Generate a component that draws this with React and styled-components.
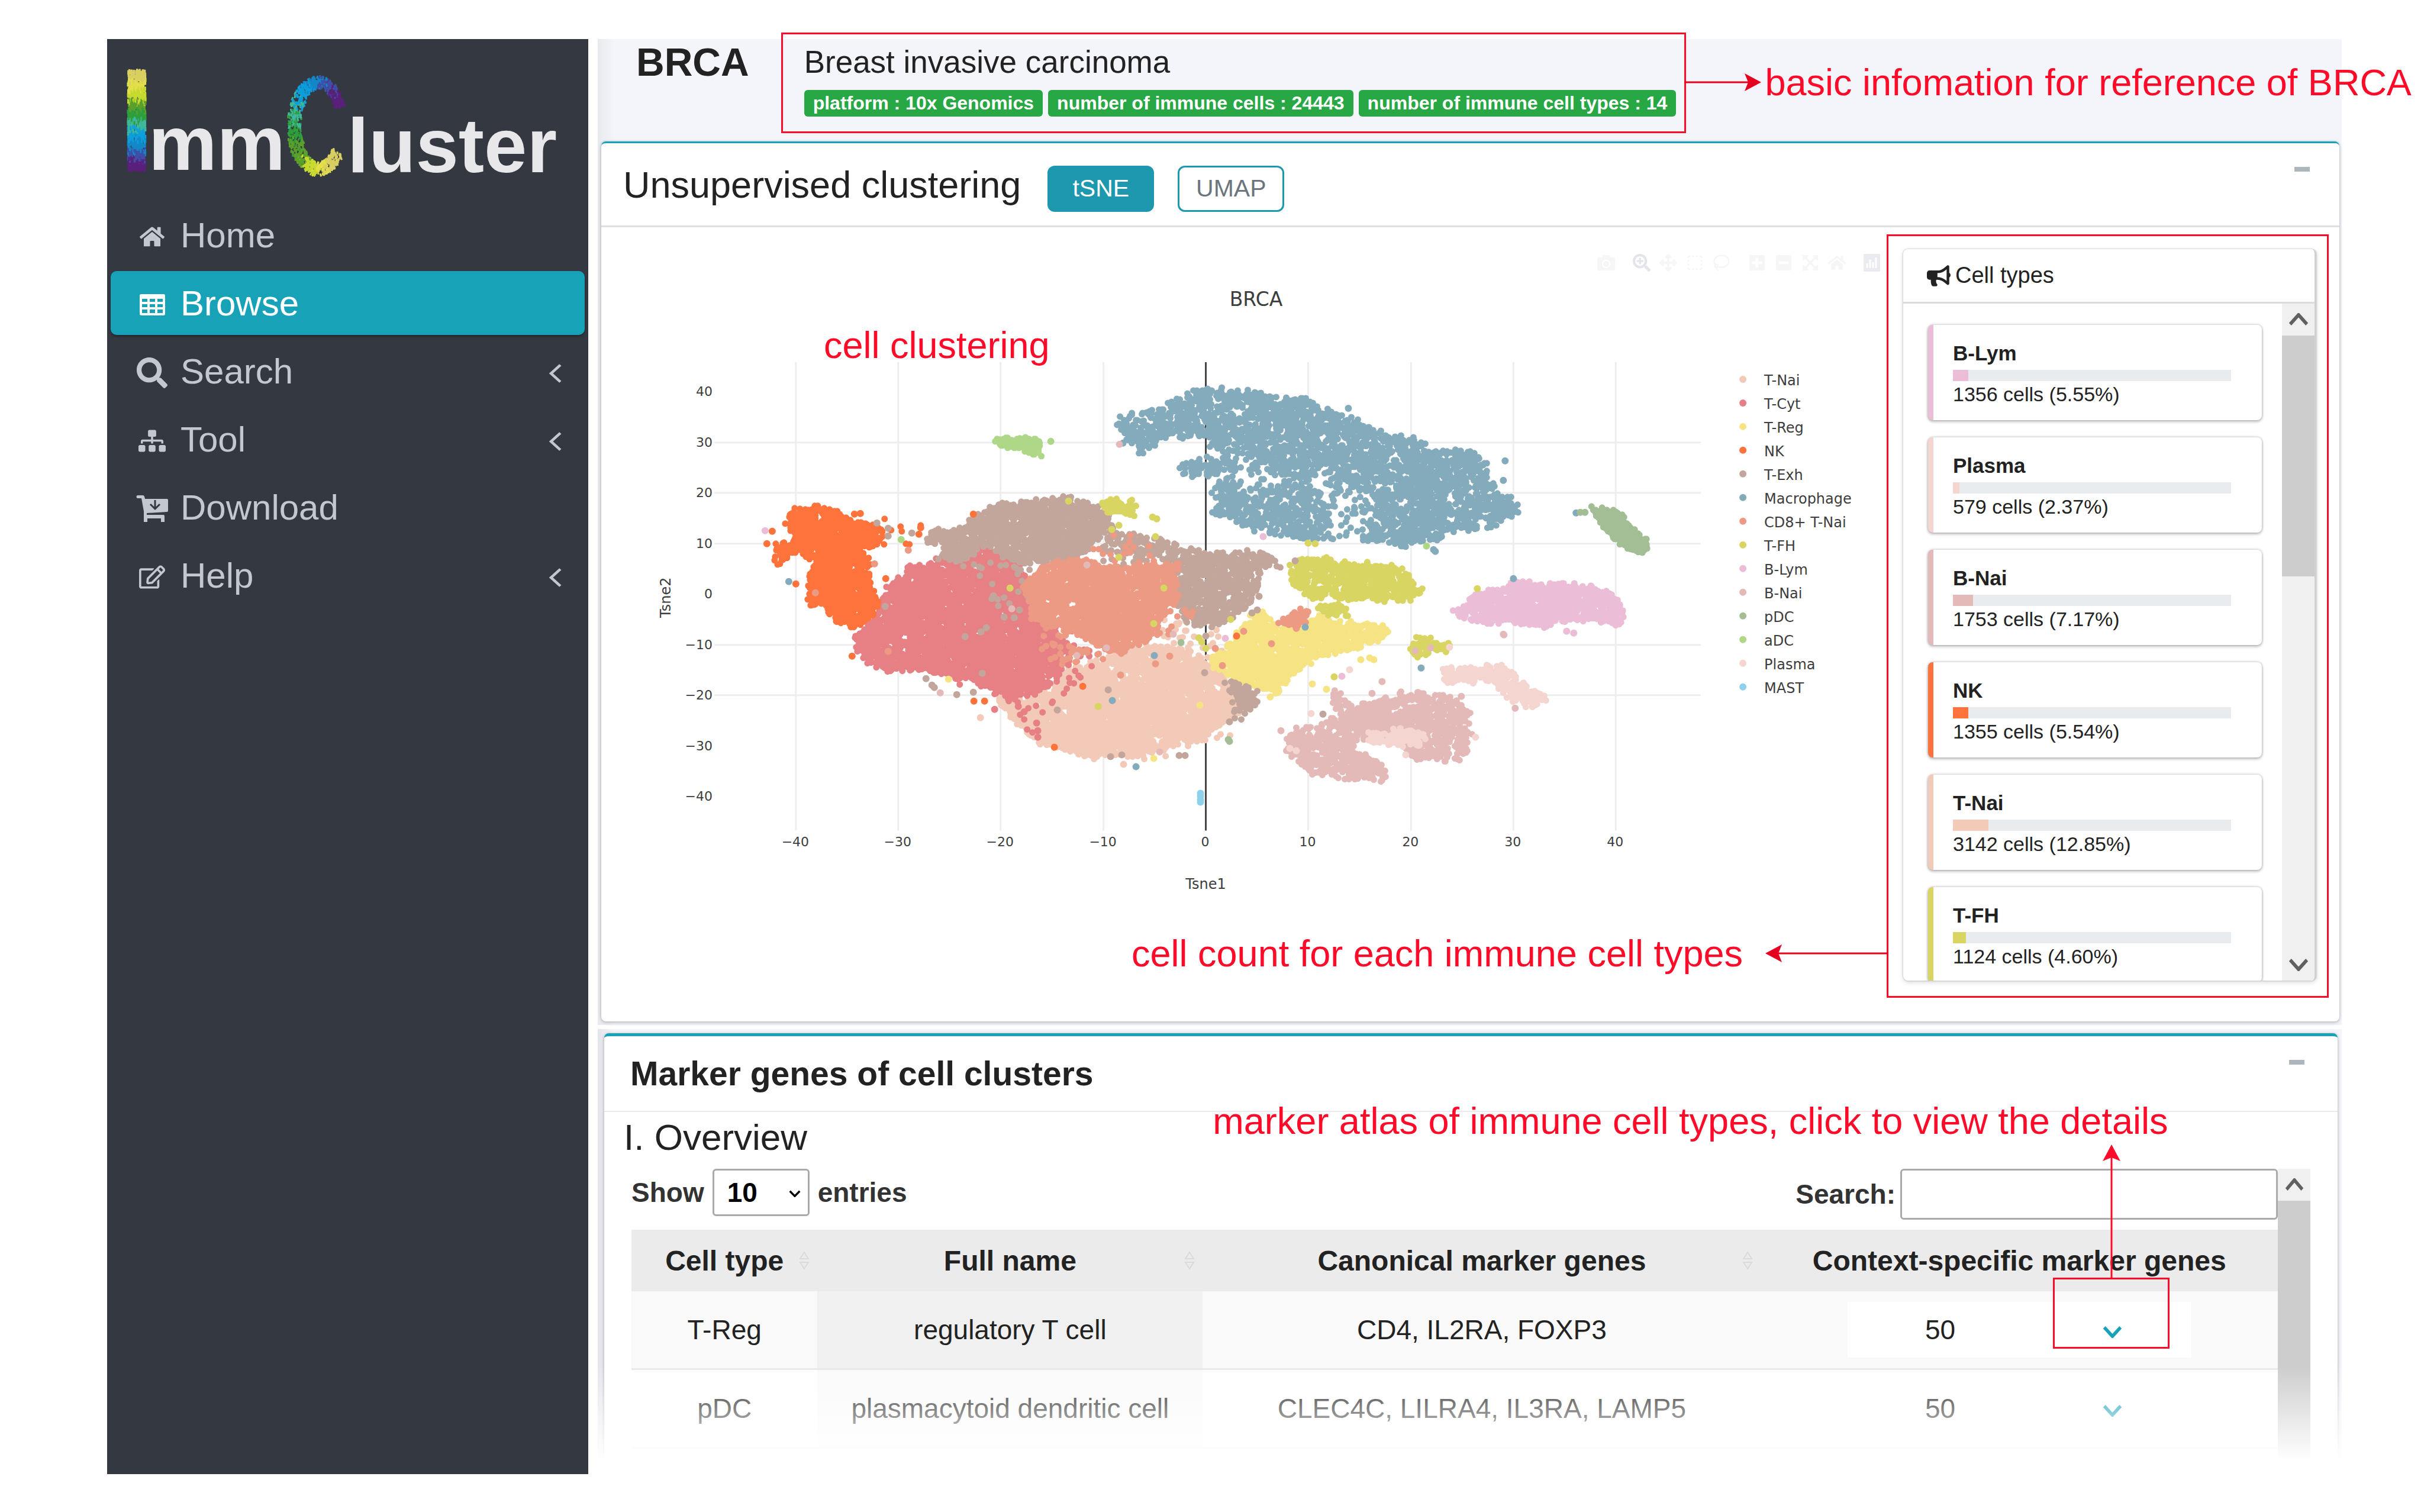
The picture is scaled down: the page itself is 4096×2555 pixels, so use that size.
import React from "react";
import styled, { createGlobalStyle } from "styled-components";
import {
  FaHome,
  FaSearch,
  FaSitemap,
  FaRegEdit,
  FaBullhorn,
  FaCamera,
  FaPlusSquare,
  FaMinusSquare,
  FaExpandArrowsAlt,
  FaSearchPlus,
  FaArrowsAlt,
} from "react-icons/fa";
import { Lasso, SquareDashed } from "lucide-react";

const COLORS = {
  "T-Nai": "#f3c9b8",
  "T-Cyt": "#e78085",
  "T-Reg": "#f6e484",
  NK: "#fe723b",
  "T-Exh": "#c2a69c",
  Macrophage: "#84abbb",
  "CD8+ T-Nai": "#ec9a83",
  "T-FH": "#d9d563",
  "B-Lym": "#ebbdd6",
  "B-Nai": "#e4bab9",
  pDC: "#a3be95",
  aDC: "#afd788",
  Plasma: "#f4d5d0",
  MAST: "#8dd2ea",
};

const cellTypes = [
  { name: "B-Lym", count: 1356, percent: "5.55" },
  { name: "Plasma", count: 579, percent: "2.37" },
  { name: "B-Nai", count: 1753, percent: "7.17" },
  { name: "NK", count: 1355, percent: "5.54" },
  { name: "T-Nai", count: 3142, percent: "12.85" },
  { name: "T-FH", count: 1124, percent: "4.60" },
];

const markers = [
  {
    type: "T-Reg",
    full: "regulatory T cell",
    genes: "CD4, IL2RA, FOXP3",
    specific: 50,
  },
  {
    type: "pDC",
    full: "plasmacytoid dendritic cell",
    genes: "CLEC4C, LILRA4, IL3RA, LAMP5",
    specific: 50,
  },
];

// cluster outlines in t-SNE units, density is in dots per square pixel
const clusters = [
  {
    name: "T-Nai",
    density: 0.06,
    shape: [[-20.5, -20.8], [-17.5, -20.8], [-15.2, -19], [-13.3, -15], [-10.5, -13.5], [-7.4, -10.6], [-2.7, -11], [-0.4, -12.9], [1.9, -16.9], [3.1, -20.8], [3.1, -24], [0.8, -26.4], [-0.4, -28.9], [-4.3, -30], [-7, -32], [-11.3, -32], [-13.6, -30.8], [-16.4, -29], [-18.7, -24.8]],
  },
  {
    name: "T-Nai",
    density: 0.006,
    shape: [[-5, -5], [1.5, -6], [2, -14], [-5, -14]],
  },
  {
    name: "T-Nai",
    density: 0.003,
    shape: [[-20, -24], [-15, -30], [-6, -33.5], [2.5, -29], [3.5, -25], [0, -27], [-10, -31]],
  },
  {
    name: "T-Cyt",
    density: 0.06,
    shape: [[-28.7, 5.6], [-26.9, 6], [-23.4, 10.7], [-21.4, 9.2], [-19.1, 6.8], [-17.5, 3.6], [-17, -1.1], [-15.6, -5], [-13.8, -9], [-13.4, -12.9], [-14.6, -16.2], [-16, -18.6], [-17.5, -20], [-19.5, -20.3], [-21.4, -18.3], [-23.4, -16.8], [-25.7, -15.6], [-29.2, -14.6], [-30.8, -15.2], [-33.1, -13.2], [-34.5, -8.6], [-33.3, -7], [-31.6, -3.5], [-31.4, 1.3], [-30, 2.8]],
  },
  {
    name: "T-Cyt",
    density: 0.005,
    shape: [[-30, -14], [-20, -20], [-17, -28], [-13, -18], [-10.5, -13], [-13, -7], [-18, -15]],
  },
  {
    name: "T-Reg",
    density: 0.06,
    shape: [[0.2, -13.4], [2.4, -10], [3.8, -5.4], [5.4, -3.8], [7.1, -7], [11.3, -4.3], [13.7, -5.6], [17.3, -6.4], [18.1, -7.9], [15.1, -10.2], [10.4, -12.7], [8, -16.5], [7.4, -19.2], [5.2, -19], [2.8, -16.5]],
  },
  {
    name: "NK",
    density: 0.06,
    shape: [[-40.8, 14.3], [-40.2, 16.4], [-38.7, 17.2], [-37, 16.9], [-35.9, 16.3], [-34.7, 14.4], [-32.7, 14.2], [-31.5, 12.3], [-31.9, 10], [-33.3, 9.2], [-32.7, 4.4], [-32.7, 1.3], [-32, -1.1], [-32.3, -3.5], [-33.3, -5.2], [-33.9, -7], [-35.9, -5.2], [-37.2, -2.4], [-38.6, -2], [-38.8, 1.3], [-38.4, 4.4], [-39, 8.4], [-40.5, 7.8], [-41.7, 5.9], [-42, 9.2], [-40.2, 10.7]],
  },
  {
    name: "NK",
    density: 0.003,
    shape: [[-33, 15.5], [-27, 13.5], [-28, 9], [-32, 8], [-32, 0], [-33, 0]],
  },
  {
    name: "T-Exh",
    density: 0.055,
    shape: [[-23.8, 13.1], [-22.6, 15.6], [-20.3, 17.5], [-17.2, 18.6], [-13.3, 19], [-10.9, 17.4], [-9.6, 16], [-9.2, 13.1], [-10.5, 10.7], [-12.5, 7], [-14.4, 5.9], [-16, 6.3], [-18.3, 6.3], [-19.9, 7.9], [-21.4, 9.9], [-23, 8], [-23.6, 5.6], [-25.3, 7.6], [-26.6, 6.6], [-25, 10], [-27.5, 10.7], [-26.5, 12.6]],
  },
  {
    name: "T-Exh",
    density: 0.04,
    shape: [[-9.5, 10.5], [-9.5, 12], [-5.7, 11.4], [-2.4, 9.5], [0, 8], [5.7, 8.2], [7.4, 5.5], [5.3, 5.3], [5.2, 1.9], [4.2, -2.4], [1.4, -6.2], [-1.9, -5.8], [-2.8, -2.4], [-3.5, 1], [-2.4, 3.6], [-4.3, 6.3]],
  },
  {
    name: "T-Exh",
    density: 0.01,
    shape: [[-10.5, 10], [-6, 9], [-6, 6], [-10.5, 5]],
  },
  {
    name: "T-Exh",
    density: 0.04,
    shape: [[1.7, -16.5], [5, -19.3], [5, -21.9], [3.3, -24.6], [2.4, -23.6], [2.8, -20.2]],
  },
  {
    name: "T-Exh",
    density: 0.003,
    shape: [[-26, 8], [-16, 6], [-17, -3], [-22, -4], [-22, 4]],
  },
  {
    name: "Macrophage",
    density: 0.034,
    shape: [[-8.4, 34.7], [-5.2, 36.2], [-1.4, 40], [0, 40.5], [5.7, 39.8], [6.6, 38.8], [9.7, 38.8], [11.8, 36.2], [15.1, 34.1], [18, 31.5], [20.3, 30.7], [22.2, 29], [26.3, 28.2], [27.7, 24.7], [28.2, 20.5], [30.5, 18.2], [30.3, 15.8], [27.7, 12.8], [24.6, 12.3], [22.7, 11.2], [19.4, 9.6], [15.1, 11], [17.2, 15], [16.4, 19.5], [12.8, 22.5], [11.5, 24.5], [9, 23], [5, 26.5], [0, 30.9], [-4.3, 30.9], [-6.3, 27.2], [-7, 29.5], [-8.4, 31.5]],
  },
  {
    name: "Macrophage",
    density: 0.034,
    shape: [[-2.7, 24.5], [-1.2, 27], [1, 25.4], [1.4, 23.6], [-1.7, 22.8]],
  },
  {
    name: "Macrophage",
    density: 0.028,
    shape: [[1.4, 22.5], [6, 21.5], [8, 22.5], [11.5, 20.5], [12.2, 16], [12.2, 11], [10.4, 10.7], [7.1, 11.4], [4.3, 13], [0.7, 16], [0.7, 19.7]],
  },
  {
    name: "Macrophage",
    density: 0.01,
    shape: [[0, 31], [9, 24], [16.5, 20], [17, 11], [12, 11], [12, 22], [1, 23], [0, 27]],
  },
  {
    name: "CD8+ T-Nai",
    density: 0.06,
    shape: [[-14.4, 6.3], [-12.1, 7], [-9.8, 5.3], [-6.6, 5.7], [-2.8, 5.7], [-2.9, 2], [-3.3, -1.1], [-4.3, -4.7], [-5.8, -9], [-8.6, -11.2], [-10.5, -10.2], [-13.3, -7], [-15.2, -5.8], [-17, -4.7], [-17, -0.3], [-18, 1.1], [-16.4, 4.9]],
  },
  {
    name: "CD8+ T-Nai",
    density: 0.007,
    shape: [[-16, -5], [-10, -9], [-5, -6], [-1, -4], [-4, 3], [-3, -8], [-9, -12], [-13.5, -14.5], [-16, -12]],
  },
  {
    name: "CD8+ T-Nai",
    density: 0.003,
    shape: [[-13, 9], [-8, 12.5], [-5, 9], [-5, 5], [-13, 6]],
  },
  {
    name: "CD8+ T-Nai",
    density: 0.08,
    shape: [[7.2, -5.2], [9, -2.9], [10.2, -4.4], [9.9, -5.9], [7.4, -6]],
  },
  {
    name: "T-FH",
    density: 0.05,
    shape: [[7.9, 5], [9.5, 6.8], [11.8, 7.1], [13.2, 6], [18.5, 5.9], [19.9, 3.6], [21.1, 0.4], [19.9, -1.6], [17.5, -1.3], [13.7, -1.3], [9.9, -0.5], [8.4, 2.3]],
  },
  {
    name: "T-FH",
    density: 0.06,
    shape: [[10.9, -2.2], [13.9, -2.6], [13.5, -4.5], [11, -3.8]],
  },
  {
    name: "T-FH",
    density: 0.07,
    shape: [[19.8, -10], [21.3, -8.3], [24.1, -10.8], [22.2, -11.3], [20.3, -12]],
  },
  {
    name: "T-FH",
    density: 0.08,
    shape: [[-10.2, 17.8], [-9, 18.6], [-6.9, 17.8], [-7, 15.3], [-8.2, 16.5], [-9.3, 15.9]],
  },
  {
    name: "B-Lym",
    density: 0.06,
    shape: [[23.6, -3.9], [25.5, -2.3], [26.7, 0.6], [28.4, 0.6], [30.3, 2.6], [32.6, 1.9], [35.5, 1.9], [36.9, 1.5], [39.2, 0.2], [40.6, -1.6], [40.8, -4.1], [40.2, -6.2], [38.3, -5.1], [34, -5.4], [33.1, -7], [31.7, -5.8], [26, -5.4]],
  },
  {
    name: "B-Nai",
    density: 0.042,
    shape: [[12.1, -19], [12.8, -18.9], [13.7, -22.1], [16.1, -21.7], [19.9, -19.3], [24.1, -20.4], [25.6, -23.6], [25.8, -28.6], [25.3, -32.6], [20.3, -32.7], [19.2, -29.6], [15, -28.6], [15, -31.6], [16.8, -33], [17.7, -36.5], [14.7, -36.9], [10.4, -35.6], [7.6, -31.4], [8.2, -26.9], [11.3, -25.5], [13, -24]],
  },
  {
    name: "Plasma",
    density: 0.055,
    shape: [[23.1, -14.8], [26.5, -14.4], [29.1, -14.4], [30.9, -17.6], [33, -19.5], [33, -21.3], [31.2, -22.4], [29.3, -20], [28.4, -17.2], [23.1, -17.4]],
  },
  {
    name: "Plasma",
    density: 0.055,
    shape: [[15.8, -27.5], [19.9, -26.9], [21.6, -28.4], [20.8, -29.9], [16.3, -29.3]],
  },
  {
    name: "pDC",
    density: 0.2,
    shape: [[37.8, 16.8], [40.2, 16], [41.3, 13.2], [43, 10.4], [42.9, 8.3], [41.4, 8.8], [39.3, 12], [38.6, 14.8]],
  },
  {
    name: "aDC",
    density: 0.2,
    shape: [[-20.4, 30.7], [-16.4, 30.5], [-16.2, 27.2], [-17.6, 28.8], [-20.2, 29.6]],
  },
];

const strays = [
  ["NK", -42.3, 12.4], ["NK", -42.8, 10], ["NK", -40, 2], ["NK", -33.7, 15.9], ["NK", -34.3, 15.8],
  ["NK", -27.8, 13.1], ["NK", -28, 11.8], ["NK", -31.2, 3], ["NK", -34.5, -12.3], ["NK", -22.6, -21.2],
  ["NK", -21.6, -21.2], ["NK", -12, -18.3], ["NK", -14.8, -30.3], ["NK", -22.7, 15.8], ["NK", 3, -8.3],
  ["B-Lym", -43, 12.5], ["Macrophage", -40.7, 2.5], ["T-Exh", -32.1, 14], ["T-Exh", -31, 13],
  ["T-Exh", -28.7, 12], ["T-Exh", -31, 11.5], ["T-Exh", -31.3, -2.5], ["aDC", -29.7, 10.8],
  ["T-Exh", -23.5, -8.4], ["T-Exh", -20.7, -0.4], ["T-Exh", -21.9, -7.5], ["T-Exh", -21.4, -6.7],
  ["T-Exh", -19.7, -4.6], ["T-Exh", -18.7, -4.7], ["T-Exh", -18.2, -3.1], ["T-Exh", -21.8, -15.7],
  ["T-Exh", -27.3, -16.7], ["T-Exh", -26.7, -18], ["T-Exh", -26.5, -18.5], ["T-Exh", -24.3, -19.9],
  ["T-Exh", -22.7, -19.4], ["B-Nai", -25.9, -19.5], ["B-Nai", -18.9, -2.9], ["T-Reg", -25.1, -16.8],
  ["T-FH", -19.1, 1.2], ["T-FH", -13.4, 18.4], ["T-FH", -8.5, 13.6], ["T-FH", -9.2, 12.7],
  ["T-FH", -5.2, 15.2], ["T-FH", -4.8, 14.8], ["T-FH", -4.9, 11.3], ["T-FH", -8.5, 7.2],
  ["T-FH", -4.1, 1.2], ["T-FH", -5.1, -5.8], ["T-FH", -10.5, -22.2], ["T-FH", -0.7, -8.6],
  ["T-FH", -0.4, -9.5], ["T-FH", 0, -10.8], ["T-FH", 2.4, -5], ["T-FH", 10, 10.1], ["T-FH", 10.7, 10],
  ["T-FH", 12.5, -16.4], ["T-FH", 26.5, 1], ["pDC", -2.4, -9.6], ["pDC", 2.2, -28.8],
  ["pDC", 2.3, -29.1], ["Macrophage", 36.1, 16], ["pDC", 36.5, 16.1], ["pDC", 37, 16.1],
  ["aDC", -15.1, 30.2], ["aDC", 21.5, 9.5],
  ["Macrophage", -5, -12.2], ["Macrophage", -9.1, -21], ["Macrophage", -6.8, -34.2],
  ["Macrophage", 21, -14.6], ["Macrophage", 9.7, -6.5], ["Macrophage", 22.2, 8.8],
  ["Macrophage", 22.4, 8.4], ["Macrophage", 13.9, 36.7], ["Macrophage", 29.2, 26.3],
  ["Macrophage", 29, 22.4], ["Macrophage", -8.1, 29.8], ["Macrophage", 30, 3],
  ["B-Nai", -8.4, 29.6], ["B-Nai", -3.2, -7.9], ["B-Nai", -9.7, -10.6], ["B-Nai", -12.6, -12.2],
  ["B-Nai", -4.5, -31.2], ["B-Nai", -11.6, 5.7], ["B-Lym", 1.9, -8.8], ["B-Lym", 5.6, 11.3],
  ["B-Lym", 13.3, -16.2], ["B-Lym", 35.2, -7.4], ["B-Lym", 35.9, -7.7], ["B-Nai", 29, -7.9],
  ["B-Nai", 29.1, -8.1], ["B-Nai", 17.2, -17.3], ["B-Nai", 7.3, -27], ["B-Nai", 24.9, -20.2],
  ["B-Nai", 20.4, -11.2], ["B-Nai", 21.9, -10.6], ["B-Nai", 30.2, -22.6], ["B-Nai", 16.2, -19.7],
  ["Plasma", 23.8, -10.5], ["Plasma", 14, -15], ["Plasma", 10.3, -23.6], ["Plasma", 26.3, -28.3],
  ["Plasma", 8.2, -30.5], ["Plasma", 8.8, -31], ["Plasma", 19.5, -31.8], ["T-Exh", 11.4, -23.8],
  ["T-Exh", -9.5, -19], ["T-Exh", -14.5, -22.9], ["T-Exh", -9.3, -32.2], ["T-Exh", -8.2, -31.8],
  ["T-Exh", -2.6, -31.9], ["T-Exh", -2, -31.9], ["T-Exh", 5.2, -0.5], ["T-Exh", 8.7, 6.6],
  ["T-Exh", 4.5, -3.8], ["T-Exh", 5, -3.2], ["T-Exh", -0.1, -15.6], ["T-Exh", 0, -8.3],
  ["T-Exh", 2.3, -25.3], ["T-Reg", -5.1, -32.5], ["T-Reg", -0.6, -22], ["T-Reg", 15.1, -13],
  ["T-Reg", 16, -12.6], ["T-Reg", 16.4, -13], ["T-Reg", 10.4, -17.8], ["T-Reg", 11.8, -18.8],
  ["T-Reg", 6.3, -20.4], ["T-Nai", -22, -24.4], ["T-Nai", -8, -33.7], ["CD8+ T-Nai", 6.4, -9.8],
  ["CD8+ T-Nai", 1.6, -14.2], ["CD8+ T-Nai", 8.8, -6.8], ["CD8+ T-Nai", 3.7, -7.4],
  ["CD8+ T-Nai", -8.3, -16], ["CD8+ T-Nai", -4.9, -13.8], ["CD8+ T-Nai", -3.5, -12.3],
  ["CD8+ T-Nai", 0.9, -10.8], ["CD8+ T-Nai", -31, -11.3], ["CD8+ T-Nai", -38.1, 0.2],
  ["CD8+ T-Nai", -32.3, 6], ["CD8+ T-Nai", -29, 8.7], ["T-Cyt", -17.7, -23.3], ["T-Cyt", -16.4, -27],
  ["T-Cyt", -16.4, -28.3], ["T-Cyt", -16.5, -25.5], ["T-Cyt", -20.6, -22.8], ["T-Cyt", -18.3, -22.2],
  ["MAST", -0.5, -39.4], ["MAST", -0.5, -40], ["MAST", -0.5, -40.7], ["MAST", -0.5, -41.2],
];

const xTicks = [-40, -30, -20, -10, 0, 10, 20, 30, 40];
const yTicks = [40, 30, 20, 10, 0, -10, -20, -30, -40];
const yLines = [30, 20, 10, -10, -20];

const toX = (v) => Math.round(1022 + v * 17.33);
const toY = (v) => Math.round(583 - v * 8.55);
const tick = (v) => String(v).replace("-", "\u2212");

const createRandom = (seed) => {
  let state = seed;
  return () => {
    state = (state * 1664525 + 1013904223) % 4294967296;
    return state / 4294967296;
  };
};

const isInside = (x, y, points) => {
  let inside = false;
  for (let i = 0, j = points.length - 1; i < points.length; j = i++) {
    const [xi, yi] = points[i];
    const [xj, yj] = points[j];
    if (yi > y !== yj > y && x < ((xj - xi) * (y - yi)) / (yj - yi) + xi) {
      inside = !inside;
    }
  }
  return inside;
};

// one zero-length round-capped segment for every cell
const clusterPath = ({ shape, density }, index) => {
  const random = createRandom(index * 97 + 11);
  const points = shape.map(([x, y]) => [toX(x), toY(y)]);
  const xs = points.map((p) => p[0]);
  const ys = points.map((p) => p[1]);
  const left = Math.min(...xs);
  const top = Math.min(...ys);
  const width = Math.max(...xs) - left;
  const height = Math.max(...ys) - top;
  const total = Math.round(width * height * density);
  let path = "";
  for (let i = 0; i < total; i++) {
    const x = left + random() * width;
    const y = top + random() * height;
    if (isInside(x, y, points)) {
      const dx = Math.round(x + (random() - 0.5) * 10);
      const dy = Math.round(y + (random() - 0.5) * 10);
      path += `M${dx} ${dy}h0`;
    }
  }
  return path;
};

const logoColors = ["#d9cf62", "#e3df4a", "#c6d92f", "#5aa02c", "#2f9e3c", "#3fb89a", "#0c9fdb", "#1487c9", "#3f4fa8", "#5b1f7c"];

const logoColor = (t, random) => {
  const i = Math.floor((t + (random() - 0.5) * 0.1) * logoColors.length);
  return logoColors[Math.max(0, Math.min(logoColors.length - 1, i))];
};

const barSpecks = () => {
  const random = createRandom(5);
  return Array.from({ length: 1100 }, () => {
    const t = random();
    return {
      x: 29 + random() * 30,
      y: 50 + t * 168,
      dx: 0,
      dy: 7,
      color: logoColor(t, random),
    };
  });
};

const arcSpecks = () => {
  const random = createRandom(8);
  return Array.from({ length: 1000 }, () => {
    const t = random();
    const angle = ((38 + t * 297) * Math.PI) / 180;
    const reach = (random() - 0.5) * (24 - Math.abs(t - 0.4) * 10);
    const x = 351 + Math.cos(angle) * (41 + reach);
    const y = 144 + Math.sin(angle) * (73 + reach);
    return {
      x,
      y,
      dx: (random() - 0.5) * 5,
      dy: 5,
      color: logoColor(t, random),
    };
  });
};

const specks = [...barSpecks(), ...arcSpecks()];

const Logo = () => (
  <LogoLink href="#home" aria-label="ImmCluster">
    <svg viewBox="0 0 801 277" width="100%">
      {specks.map((s, i) => (
        <line
          key={i}
          x1={s.x.toFixed(1)}
          y1={s.y.toFixed(1)}
          x2={(s.x + s.dx).toFixed(1)}
          y2={(s.y + s.dy).toFixed(1)}
          stroke={s.color}
          strokeWidth="3"
        />
      ))}
      <text x="64" y="221">
        mm
      </text>
      <text x="400" y="225">
        luster
      </text>
    </svg>
  </LogoLink>
);

const TableIcon = () => (
  <svg width="43" height="36" viewBox="0 0 43 36" fill="currentColor">
    <path
      fillRule="evenodd"
      d="M3 0h37a3 3 0 0 1 3 3v30a3 3 0 0 1-3 3H3a3 3 0 0 1-3-3V3a3 3 0 0 1 3-3zM4 8v5h9V8zm13 0v5h9V8zm13 0v5h9V8zM4 17v5h9v-5zm13 0v5h9v-5zm13 0v5h9v-5zM4 26v6h9v-6zm13 0v6h9v-6zm13 0v6h9v-6z"
    />
  </svg>
);

const CartIcon = () => (
  <svg width="54" height="46" viewBox="0 0 54 46" fill="currentColor">
    <path d="M3 0h8a3 3 0 0 1 3 2l1 4h37a2 2 0 0 1 2 2v18a2 2 0 0 1-2 2l-34 2v3h28a2 2 0 0 1 2 2v10h-6v-6H19v6h-6V27L9 5H3a2 2 0 0 1 0-5z" />
    <path d="M32 8v14M24 15l8 8 8-8" fill="none" stroke="#343840" strokeWidth="3" />
  </svg>
);

const BarsIcon = () => (
  <svg width="28" height="30" viewBox="0 0 28 30">
    <rect width="28" height="30" rx="2" fill="#e9ebf0" />
    <path d="M6 24V16M11 24V10M16 24V14M21 24V6" stroke="#fff" strokeWidth="3" />
  </svg>
);

const Angle = ({ direction = "down", width, height, stroke }) => {
  const paths = {
    down: "M2 2L12 12L22 2",
    up: "M2 12L12 2L22 12",
    left: "M12 2L2 12L12 22",
  };
  return (
    <svg
      width={width}
      height={height}
      viewBox={direction === "left" ? "0 0 14 24" : "0 0 24 14"}
      fill="none"
      stroke="currentColor"
      strokeWidth={stroke}
      preserveAspectRatio="none"
      aria-hidden="true"
    >
      <path d={paths[direction]} />
    </svg>
  );
};

const SortIcon = () => (
  <svg width="18" height="34" viewBox="0 0 18 34" fill="none" stroke="#dadada" strokeWidth="2">
    <path d="M2 14L9 3L16 14ZM2 20L9 31L16 20Z" />
  </svg>
);

const menu = [
  { label: "Home", icon: <FaHome size={42} /> },
  { label: "Browse", icon: <TableIcon />, active: true },
  { label: "Search", icon: <FaSearch size={52} />, nested: true },
  { label: "Tool", icon: <FaSitemap size={46} />, nested: true },
  { label: "Download", icon: <CartIcon /> },
  { label: "Help", icon: <FaRegEdit size={44} />, nested: true },
];

const SideMenu = () => (
  <Sidebar>
    <Logo />
    <Menu>
      {menu.map((item) => (
        <MenuLink key={item.label} href={`#${item.label}`} $active={item.active}>
          <MenuIcon>{item.icon}</MenuIcon>
          <span>{item.label}</span>
          {item.nested && (
            <MenuArrow>
              <Angle direction="left" width={22} height={34} stroke={3} />
            </MenuArrow>
          )}
        </MenuLink>
      ))}
    </Menu>
  </Sidebar>
);

const Chart = () => (
  <Plot viewBox="0 40 2201 1196" role="img" aria-label="BRCA t-SNE scatter plot">
    <g stroke="#eeeeee" strokeWidth="3">
      {xTicks.map((v) => (
        <line key={v} x1={toX(v)} x2={toX(v)} y1="191" y2="983" />
      ))}
      {yLines.map((v) => (
        <line key={v} x1="191" x2="1859" y1={toY(v)} y2={toY(v)} />
      ))}
    </g>
    <line x1={toX(0)} x2={toX(0)} y1="191" y2="983" stroke="#444" strokeWidth="3" />
    {clusters.map((cluster, i) => (
      <path
        key={i}
        d={clusterPath(cluster, i)}
        stroke={COLORS[cluster.name]}
        strokeWidth="11"
        strokeLinecap="round"
      />
    ))}
    {strays.map(([name, x, y], i) => (
      <circle key={i} cx={toX(x)} cy={toY(y)} r="6" fill={COLORS[name]} />
    ))}
    <text x="1107" y="96" fontSize="33" textAnchor="middle">
      BRCA
    </text>
    <g fontSize="22">
      {xTicks.map((v) => (
        <text key={v} x={toX(v) - 1} y="1009" textAnchor="middle">
          {tick(v)}
        </text>
      ))}
      {yTicks.map((v) => (
        <text key={v} x="188" y={toY(v) + 7} textAnchor="end">
          {tick(v)}
        </text>
      ))}
    </g>
    <g fontSize="24">
      <text x="1022" y="1081" textAnchor="middle">
        Tsne1
      </text>
      <text transform="translate(117 589) rotate(-90)" textAnchor="middle">
        Tsne2
      </text>
      {Object.keys(COLORS).map((name, i) => (
        <g key={name}>
          <circle cx="1930" cy={220 + i * 40} r="6" fill={COLORS[name]} />
          <text x="1966" y={230 + i * 40}>
            {name}
          </text>
        </g>
      ))}
    </g>
  </Plot>
);

const ModeBar = () => (
  <Tools>
    <ToolGroup>
      <Tool aria-label="Download plot"><FaCamera /></Tool>
    </ToolGroup>
    <ToolGroup>
      <Tool aria-label="Zoom" $on><FaSearchPlus /></Tool>
      <Tool aria-label="Pan"><FaArrowsAlt /></Tool>
      <Tool aria-label="Box select"><SquareDashed size={30} /></Tool>
      <Tool aria-label="Lasso select"><Lasso size={30} /></Tool>
    </ToolGroup>
    <ToolGroup>
      <Tool aria-label="Zoom in"><FaPlusSquare /></Tool>
      <Tool aria-label="Zoom out"><FaMinusSquare /></Tool>
      <Tool aria-label="Autoscale"><FaExpandArrowsAlt /></Tool>
      <Tool aria-label="Reset axes"><FaHome /></Tool>
    </ToolGroup>
    <ToolGroup>
      <Tool aria-label="Plotly"><BarsIcon /></Tool>
    </ToolGroup>
  </Tools>
);

const CellTypes = () => (
  <PanelWrap>
    <Panel>
      <PanelTitle>
        <FaBullhorn size={40} />
        Cell types
      </PanelTitle>
      <PanelBody>
        <CellList>
          {cellTypes.map((cell) => (
            <CellCard key={cell.name} $color={COLORS[cell.name]}>
              <CellName>{cell.name}</CellName>
              <Progress>
                <ProgressFill $color={COLORS[cell.name]} style={{ width: `${cell.percent}%` }} />
              </Progress>
              <CellCount>
                {cell.count} cells ({cell.percent}%)
              </CellCount>
            </CellCard>
          ))}
        </CellList>
        <ScrollTrack>
          <ScrollButton aria-label="Scroll up">
            <Angle direction="up" width={34} height={22} stroke={4} />
          </ScrollButton>
          <ScrollThumb />
          <ScrollButton aria-label="Scroll down">
            <Angle width={34} height={22} stroke={4} />
          </ScrollButton>
        </ScrollTrack>
      </PanelBody>
    </Panel>
    <PanelFrame>
      <CountNote>
        cell count for each immune cell types
        <svg width="208" height="30" viewBox="0 0 208 30">
          <path d="M20 15H208" stroke="#e60020" strokeWidth="3" />
          <path d="M0 15L28 0L22 15L28 30Z" fill="#e60020" />
        </svg>
      </CountNote>
    </PanelFrame>
  </PanelWrap>
);

const MarkerTable = () => (
  <Table>
    <colgroup>
      <col style={{ width: "11.3%" }} />
      <col style={{ width: "23.4%" }} />
      <col style={{ width: "33.9%" }} />
      <col style={{ width: "31.4%" }} />
    </colgroup>
    <thead>
      <tr>
        {["Cell type", "Full name", "Canonical marker genes"].map((title) => (
          <th key={title}>
            <SortButton>
              {title}
              <SortIcon />
            </SortButton>
          </th>
        ))}
        <th>Context-specific marker genes</th>
      </tr>
    </thead>
    <tbody>
      {markers.map((row, i) => (
        <tr key={row.type}>
          <td>{row.type}</td>
          <td>{row.full}</td>
          <td>{row.genes}</td>
          <td>
            <Specific>
              <span>{row.specific}</span>
              <ToggleCell>
                <Toggle aria-label={`Show ${row.type} markers`}>
                  <Angle width={33} height={21} stroke={4} />
                </Toggle>
                {i === 0 && (
                  <ToggleFrame>
                    <AtlasNote>
                      marker atlas of immune cell types, click to view the details
                      <svg width="30" height="228" viewBox="0 0 30 228">
                        <path d="M15 20V228" stroke="#ff0a28" strokeWidth="3" />
                        <path d="M15 0L30 28L15 22L0 28Z" fill="#ff0a28" />
                      </svg>
                    </AtlasNote>
                  </ToggleFrame>
                )}
              </ToggleCell>
            </Specific>
          </td>
        </tr>
      ))}
    </tbody>
  </Table>
);

const App = () => {
  return (
    <Page>
      <GlobalStyle />
      <SideMenu />
      <Main>
        <Band>
          <Header>
            <h1>BRCA</h1>
            <Info>
              <InfoName>Breast invasive carcinoma</InfoName>
              <Badges>
                <Badge>platform : 10x Genomics</Badge>
                <Badge>number of immune cells : 24443</Badge>
                <Badge>number of immune cell types : 14</Badge>
              </Badges>
              <InfoNote>
                <svg width="130" height="30" viewBox="0 0 130 30">
                  <path d="M0 15H110" stroke="#e60020" strokeWidth="3" />
                  <path d="M130 15L102 0L108 15L102 30Z" fill="#e60020" />
                </svg>
                basic infomation for reference of BRCA
              </InfoNote>
            </Info>
          </Header>
          <Card>
            <ClusterHeader>
              <h2>Unsupervised clustering</h2>
              <Buttons>
                <ModeButton $active>tSNE</ModeButton>
                <ModeButton>UMAP</ModeButton>
              </Buttons>
              <Collapse aria-label="Collapse" />
            </ClusterHeader>
            <ClusterBody>
              <ChartArea>
                <ModeBar />
                <Chart />
                <ChartNote>cell clustering</ChartNote>
              </ChartArea>
              <CellTypes />
            </ClusterBody>
          </Card>
        </Band>
        <MarkerBand>
          <Card $thick>
            <MarkerHeader>
              <h2>Marker genes of cell clusters</h2>
              <Collapse aria-label="Collapse" />
            </MarkerHeader>
            <Overview>I. Overview</Overview>
            <MarkerBody>
              <TableArea>
                <Toolbar>
                  <Length>
                    Show
                    <SelectWrap>
                      <select defaultValue="10">
                        <option>10</option>
                        <option>25</option>
                        <option>50</option>
                      </select>
                      <Angle width={20} height={12} stroke={4} />
                    </SelectWrap>
                    entries
                  </Length>
                  <SearchLabel>
                    Search:
                    <input type="search" />
                  </SearchLabel>
                </Toolbar>
                <MarkerTable />
              </TableArea>
              <ScrollTrack>
                <ScrollButton aria-label="Scroll up">
                  <Angle direction="up" width={32} height={22} stroke={4} />
                </ScrollButton>
                <ScrollThumb $full />
              </ScrollTrack>
            </MarkerBody>
          </Card>
          <Fade />
        </MarkerBand>
      </Main>
    </Page>
  );
};

export default App;

const GlobalStyle = createGlobalStyle`
  * {
    box-sizing: border-box;
    margin: 0;
    padding: 0;
  }

  body {
    background: #fff;
    color: #222;
    font-family: "Liberation Sans", Arial, sans-serif;
  }

  button,
  input,
  select {
    border: none;
    background: none;
    font: inherit;
    color: inherit;
  }

  a {
    color: inherit;
    text-decoration: none;
  }
`;

const Page = styled.div`
  min-height: 100vh;
  display: flex;
  gap: 16px;
  padding: 66px 139px 64px 181px;
`;

const Sidebar = styled.aside`
  flex: 0 0 813px;
  padding: 0 6px;
  background: #343840;
  color: #c2c7d0;
`;

const LogoLink = styled.a`
  display: block;

  svg {
    display: block;
  }

  text {
    font-size: 130px;
    font-weight: 700;
    fill: #e8e7e9;
  }
`;

const Menu = styled.nav`
  display: flex;
  flex-direction: column;
  gap: 7px;
`;

const MenuLink = styled.a`
  height: 108px;
  display: flex;
  align-items: center;
  gap: 16px;
  padding: 0 38px;
  border-radius: 10px;
  font-size: 60px;
  color: ${({ $active }) => ($active ? "#fff" : "inherit")};
  background: ${({ $active }) => ($active ? "#17a2b8" : "none")};
  box-shadow: ${({ $active }) => ($active ? "0 3px 4px rgba(0, 0, 0, 0.3)" : "none")};
`;

const MenuIcon = styled.span`
  width: 64px;
  display: flex;
  justify-content: center;
  padding-top: 6px;
`;

const MenuArrow = styled.span`
  display: flex;
  margin-left: auto;
  padding-top: 8px;
`;

const Main = styled.main`
  flex: 1;
  min-width: 0;
  display: flex;
  flex-direction: column;
  gap: 7px;
`;

const Band = styled.section`
  padding: 0 4px 6px 6px;
  background: linear-gradient(90deg, #e8eaee 0, #f4f5fa 28px);
`;

const MarkerBand = styled.section`
  flex: 1;
  position: relative;
  display: flex;
  flex-direction: column;
  padding: 7px 7px 0 11px;
  background: linear-gradient(90deg, #e4e5eb 0, #f4f5fa 28px);
`;

const Header = styled.header`
  height: 173px;
  display: flex;
  align-items: flex-start;
  gap: 54px;
  padding-left: 59px;

  h1 {
    padding-top: 6px;
    font-size: 66px;
    line-height: 66px;
  }
`;

const Info = styled.div`
  position: relative;
  margin-top: -11px;
  padding: 17px 14px 25px 36px;
  border: 3px solid #ff0a28;
`;

const InfoName = styled.p`
  font-size: 53px;
  line-height: 60px;
`;

const Badges = styled.div`
  display: flex;
  gap: 9px;
  margin-top: 17px;
`;

const Badge = styled.span`
  padding: 0 15px;
  border-radius: 6px;
  background: #28a745;
  color: #fff;
  font-size: 32px;
  font-weight: 700;
  line-height: 45px;
  white-space: nowrap;
`;

const Note = styled.span`
  position: absolute;
  color: #ff0a28;
  font-size: 63px;
  line-height: 72px;
  white-space: nowrap;
`;

const InfoNote = styled(Note)`
  left: 100%;
  top: 45px;
  display: flex;
  align-items: center;
  gap: 6px;
`;

const Card = styled.div`
  flex: 1;
  border-top: ${({ $thick }) => ($thick ? 5 : 3)}px solid #17a2b8;
  border-radius: 8px;
  background: #fff;
  box-shadow: 0 0 4px rgba(0, 0, 0, 0.2), 0 3px 6px rgba(0, 0, 0, 0.15);
`;

const CardHeader = styled.div`
  display: flex;
  align-items: center;
  border-bottom: 3px solid #dfdfdf;
`;

const ClusterHeader = styled(CardHeader)`
  height: 142px;
  gap: 45px;
  padding: 0 50px 0 37px;

  h2 {
    font-size: 63px;
    font-weight: 400;
  }
`;

const MarkerHeader = styled(CardHeader)`
  height: 128px;
  padding: 0 56px 0 44px;
  border-bottom: 2px solid #ebebeb;

  h2 {
    font-size: 57px;
  }
`;

const Collapse = styled.button`
  align-self: flex-start;
  width: 26px;
  height: 8px;
  margin-top: 40px;
  margin-left: auto;
  background: #adb5bd;
`;

const Buttons = styled.div`
  display: flex;
  gap: 40px;
  padding-top: 14px;
`;

const ModeButton = styled.button`
  width: 180px;
  height: 78px;
  border: 3px solid #1d98af;
  border-radius: 12px;
  background: ${({ $active }) => ($active ? "#1d98af" : "#fff")};
  color: ${({ $active }) => ($active ? "#fff" : "#6c757d")};
  font-size: 41px;
`;

const ClusterBody = styled.div`
  display: flex;
  padding: 37px 39px 69px 0;
`;

const ChartArea = styled.div`
  flex: 1;
  min-width: 0;
  position: relative;
`;

const ChartNote = styled(Note)`
  left: 376px;
  top: 126px;
`;

const Plot = styled.svg`
  display: block;
  width: 100%;
  fill: none;

  text {
    fill: #3d3d3d;
    font-family: "DejaVu Sans", Verdana, sans-serif;
  }
`;

const Tools = styled.div`
  height: 40px;
  display: flex;
  align-items: center;
  justify-content: flex-end;
  gap: 30px;
  padding: 6px 39px 0 0;
`;

const ToolGroup = styled.div`
  display: flex;
  gap: 15px;
`;

const Tool = styled.button`
  display: flex;
  font-size: 30px;
  color: ${({ $on }) => ($on ? "#e3e5ea" : "#f6f6f7")};
`;

const PanelWrap = styled.div`
  position: relative;
  flex: 0 0 698px;
`;

const Panel = styled.div`
  height: 1236px;
  display: flex;
  flex-direction: column;
  border-right: 3px solid #d0d0d0;
  border-radius: 8px;
  background: #fff;
  box-shadow: 0 0 3px rgba(0, 0, 0, 0.25), 0 3px 8px rgba(0, 0, 0, 0.15);
  overflow: hidden;
`;

const PanelTitle = styled.h3`
  flex: 0 0 92px;
  display: flex;
  align-items: center;
  gap: 8px;
  padding-left: 40px;
  border-bottom: 3px solid #dcdcdc;
  font-size: 38px;
  font-weight: 400;
`;

const PanelBody = styled.div`
  flex: 1;
  min-height: 0;
  display: flex;
`;

const CellList = styled.ul`
  flex: 1;
  display: flex;
  flex-direction: column;
  gap: 29px;
  padding: 36px 34px 0 42px;
  list-style: none;
`;

const CellCard = styled.li`
  padding: 28px 52px 24px 33px;
  border-left: 9px solid ${({ $color }) => $color};
  border-radius: 8px;
  background: #fff;
  box-shadow: 0 0 4px rgba(0, 0, 0, 0.3), 0 3px 5px rgba(0, 0, 0, 0.2);
`;

const CellName = styled.h4`
  font-size: 35px;
  line-height: 40px;
`;

const Progress = styled.div`
  height: 19px;
  margin: 8px 0 2px;
  background: #e9ecef;
`;

const ProgressFill = styled.div`
  height: 100%;
  background: ${({ $color }) => $color};
`;

const CellCount = styled.p`
  font-size: 34px;
  line-height: 40px;
`;

const ScrollTrack = styled.div`
  flex: 0 0 55px;
  display: flex;
  flex-direction: column;
  background: #f0f0f0;
`;

const ScrollButton = styled.button`
  flex: 0 0 54px;
  display: flex;
  align-items: center;
  justify-content: center;
  color: #606060;
`;

const ScrollThumb = styled.div`
  flex: ${({ $full }) => ($full ? "1" : "0 0 407px")};
  margin-bottom: auto;
  background: #cdcdcd;
`;

const Frame = styled.div`
  position: absolute;
  border: 3px solid #ff0a28;
`;

const PanelFrame = styled(Frame)`
  inset: -25px -21px -29px -28px;
  pointer-events: none;
`;

const CountNote = styled(Note)`
  right: 100%;
  bottom: 36px;
  display: flex;
  align-items: center;
  gap: 38px;
`;

const Overview = styled.h3`
  padding-left: 33px;
  font-size: 62px;
  font-weight: 400;
  line-height: 85px;
`;

const MarkerBody = styled.div`
  display: flex;
  padding: 11px 46px 0 46px;
`;

const TableArea = styled.div`
  flex: 1;
  min-width: 0;
  min-height: 516px;
`;

const Toolbar = styled.div`
  height: 103px;
  display: flex;
  align-items: flex-start;
  justify-content: space-between;
  font-size: 46px;
  font-weight: 700;
  color: #333;
`;

const Length = styled.label`
  display: flex;
  align-items: center;
  gap: 14px;
`;

const SelectWrap = styled.span`
  position: relative;
  color: #000;

  select {
    width: 164px;
    height: 80px;
    padding-left: 22px;
    border: 3px solid #aaa;
    border-radius: 6px;
    background: #fff;
    appearance: none;
  }

  svg {
    position: absolute;
    right: 15px;
    top: 36px;
    pointer-events: none;
  }
`;

const SearchLabel = styled.label`
  display: flex;
  align-items: center;
  gap: 8px;

  input {
    width: 638px;
    height: 86px;
    border: 3px solid #aaa;
    border-radius: 6px;
    background: #fff;
  }
`;

const Table = styled.table`
  width: 100%;
  table-layout: fixed;
  border-spacing: 0;
  font-size: 46px;
  text-align: center;

  th {
    height: 104px;
    background: #ebebeb;
    font-size: 48px;
    white-space: nowrap;
  }

  td {
    height: 133px;
    border-bottom: 3px solid #e8e8e8;
    background: #fff;
  }

  td:nth-child(2) {
    background: #fafafa;
  }

  tbody tr:first-child td {
    background: #f9f9f9;
  }

  tbody tr:first-child td:nth-child(2) {
    background: #f0f0f0;
  }
`;

const SortButton = styled.button`
  position: relative;
  width: 100%;

  svg {
    position: absolute;
    right: 13px;
    top: 10px;
  }
`;

const Specific = styled.div`
  width: 581px;
  height: 94px;
  display: grid;
  grid-template-columns: 27fr 23fr;
  align-items: center;
  margin: 0 auto;
  background: #fff;
`;

const ToggleCell = styled.div`
  position: relative;
  height: 100%;
`;

const Toggle = styled.button`
  width: 100%;
  height: 100%;
  display: flex;
  align-items: center;
  justify-content: center;
  padding-top: 6px;
  color: #17a2b8;
`;

const ToggleFrame = styled(Frame)`
  left: 34px;
  top: -41px;
  width: 197px;
  height: 120px;
  pointer-events: none;
`;

const AtlasNote = styled(Note)`
  right: 0;
  bottom: 100%;
  display: flex;
  flex-direction: column;
  align-items: flex-end;
  gap: 4px;

  svg {
    margin-right: 80px;
  }
`;

const Fade = styled.div`
  position: absolute;
  inset: auto 0 -12px 0;
  height: 194px;
  background: linear-gradient(rgba(255, 255, 255, 0), #fff 82%);
  pointer-events: none;
`;
